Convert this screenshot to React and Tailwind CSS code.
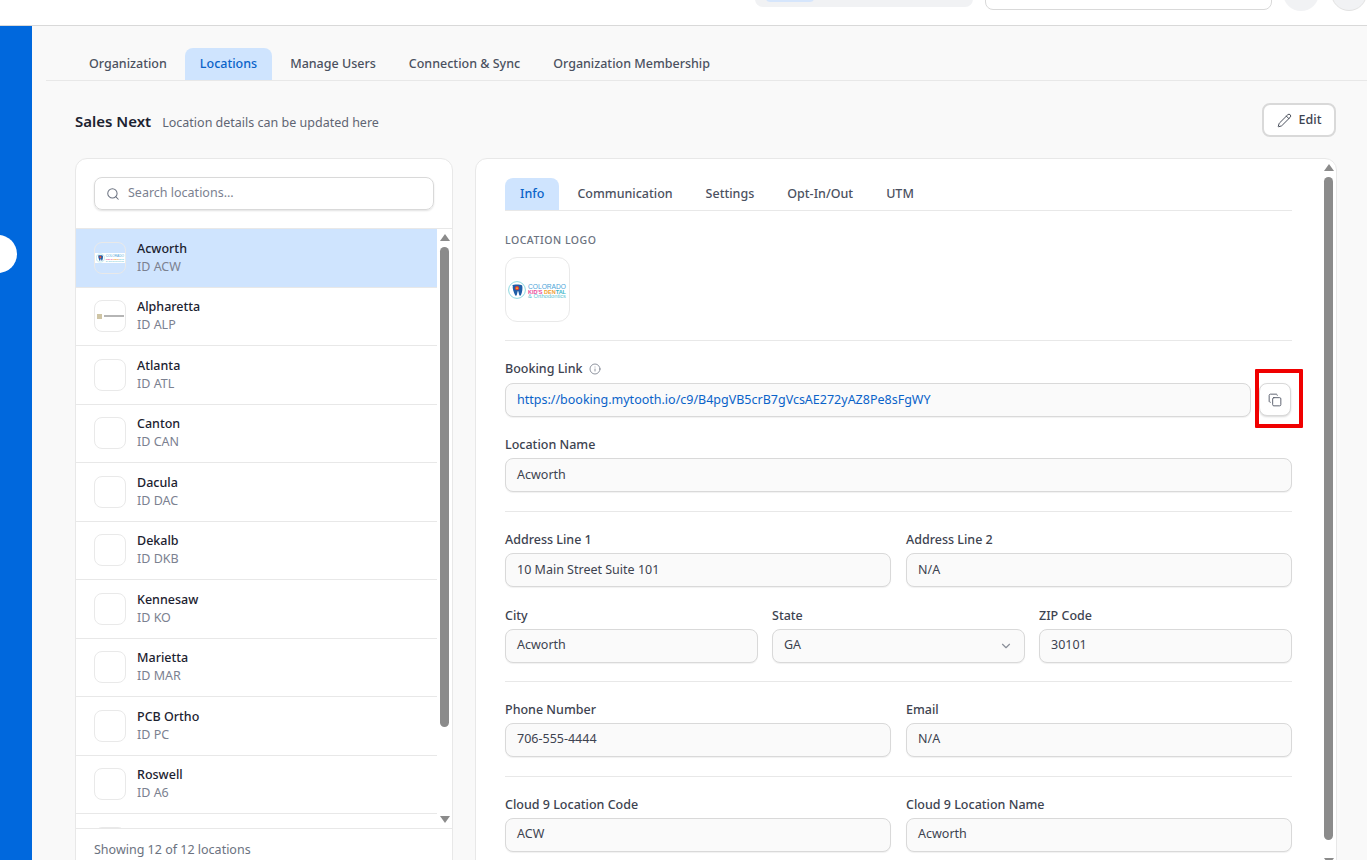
import { Search, Pencil, Info, Copy, ChevronDown } from 'lucide-react'

const locations = [
  { name: 'Acworth', id: 'ACW', logo: 'colorado' },
  { name: 'Alpharetta', id: 'ALP', logo: 'small' },
  { name: 'Atlanta', id: 'ATL' },
  { name: 'Canton', id: 'CAN' },
  { name: 'Dacula', id: 'DAC' },
  { name: 'Dekalb', id: 'DKB' },
  { name: 'Kennesaw', id: 'KO' },
  { name: 'Marietta', id: 'MAR' },
  { name: 'PCB Ortho', id: 'PC' },
  { name: 'Roswell', id: 'A6' },
  { name: '', id: '' },
]

function ColoradoLogo({ className }) {
  return (
    <svg viewBox="0 0 60 20" className={className}>
      <circle cx="9" cy="10" r="8.400" fill="none" stroke="#7fd4dc" strokeWidth="0.9" />
      <path d="M3.800 5.500c2-1.300 8.400-1.300 10.400 0 .6 3 0 6.500-1 9-.6 1.800-1.700 1.800-2.100 0l-.7-3c-.2-.7-.6-.7-.8 0l-.7 3c-.4 1.800-1.500 1.800-2.100 0-1-2.500-2.600-6-2-9z" fill="#1f5fa8" />
      <circle cx="9" cy="8.200" r="2.100" fill="#e23b3b" />
      <circle cx="9" cy="8.200" r="0.900" fill="#f5c518" />
      <text x="20" y="8.800" fontSize="6.600" textLength="38" lengthAdjust="spacingAndGlyphs" fill="#4aa3d8" fontFamily="Liberation Sans, sans-serif">COLORADO</text>
      <text x="20" y="14" fontSize="5.200" fontWeight="700" textLength="38" lengthAdjust="spacingAndGlyphs" fill="#e84c9a" fontFamily="Liberation Sans, sans-serif">KID'S <tspan fill="#f0a030">DEN</tspan><tspan fill="#3bb5c9">TAL</tspan></text>
      <text x="20" y="18.300" fontSize="4.600" textLength="38" lengthAdjust="spacingAndGlyphs" fill="#5fc4d4" fontFamily="Liberation Sans, sans-serif">&amp; Orthodontics</text>
    </svg>
  )
}

function Scrollbar({ thumbClass, className }) {
  return (
    <div className={`flex flex-col items-center shrink-0 ${className}`}>
      <div className="w-0 h-0 mt-[5px] border-x-[5px] border-x-transparent border-b-[7px] border-b-[#8b8b8b]" />
      <div className={`w-[9px] rounded-full bg-[#8b8b8b] ${thumbClass}`} />
      <div className="flex-1" />
      <div className="w-0 h-0 mb-[5px] border-x-[5px] border-x-transparent border-t-[7px] border-t-[#8b8b8b]" />
    </div>
  )
}

function LocationRow({ loc, active }) {
  return (
    <div className={`h-[58.5px] shrink-0 flex items-center gap-[11px] pl-[18px] border-b border-[#e8e8e8] ${active ? 'bg-[#cfe4fe]' : 'bg-white'}`}>
      <div className="w-8 h-8 shrink-0 rounded-lg border border-[#e9e9e9] flex items-center justify-center overflow-hidden">
        {loc.logo === 'colorado' && (
          <div className="w-full bg-white h-[10px] flex items-center justify-center">
            <ColoradoLogo className="w-[29px] h-[10px]" />
          </div>
        )}
        {loc.logo === 'small' && (
          <div className="flex items-center gap-[2px]">
            <div className="w-[5px] h-[5px] bg-[#cfc5a5]" />
            <div className="w-[20px] h-[2px] bg-[#b5b5b5]" />
          </div>
        )}
      </div>
      {loc.name && (
        <div className="min-w-0">
          <div className="text-[12.5px] leading-[18px] font-medium text-[#1c2230]">{loc.name}</div>
          <div className="text-[12.5px] leading-[18px] text-[#7b8190]">ID {loc.id}</div>
        </div>
      )}
    </div>
  )
}

function Label({ children }) {
  return <div className="text-[12.5px] leading-[16px] font-medium text-[#3d4350] mb-[5px]">{children}</div>
}

function Field({ label, value, select }) {
  return (
    <div className="min-w-0">
      <Label>{label}</Label>
      <div className="h-[34px] rounded-lg border border-[#d9d9d9] bg-[#fafafa] shadow-[0_1px_1px_rgba(0,0,0,0.06)] flex items-center justify-between px-[11px] text-[12.5px] text-[#3d4350]">
        <span>{value}</span>
        {select && <ChevronDown className="w-[14px] h-[14px] text-[#8a8f99]" />}
      </div>
    </div>
  )
}

function Divider({ className }) {
  return <div className={`h-px bg-[#e8e8e8] ${className}`} />
}

export default function App() {
  const orgTabs = ['Organization', 'Locations', 'Manage Users', 'Connection & Sync', 'Organization Membership']
  const infoTabs = ['Info', 'Communication', 'Settings', 'Opt-In/Out', 'UTM']

  return (
    <div className="h-[860px] overflow-hidden flex flex-col bg-[#f9f9f9] font-['Noto_Sans',sans-serif] relative">
      {/* Top bar, mostly cut off by the capture */}
      <header className="h-[26px] shrink-0 bg-white border-b border-[#d9d9d9] flex justify-end items-end pb-[14px] overflow-hidden">
        <div className="w-[218px] h-[30px] mb-[4px] rounded-lg bg-[#f1f2f4] shrink-0 flex items-end pl-[11px] pb-[5px]">
          <div className="w-[48px] h-[10px] rounded bg-[#d6e6fc]" />
        </div>
        <div className="w-[287px] h-[30px] ml-[12px] mb-[1px] rounded-lg bg-white border border-[#d9d9d9] shrink-0" />
        <div className="w-[36px] h-[36px] ml-[11px] rounded-full bg-[#f1f2f4] shrink-0" />
        <div className="w-[36px] h-[36px] ml-[12px] rounded-full bg-[#f1f2f4] border border-[#e2e2e2] shrink-0" />
      </header>

      <div className="flex-1 flex min-h-0">
        <aside className="w-8 shrink-0 bg-[#0068dd]" />

        <main className="flex-1 min-w-0 pl-[14px]">
          <nav className="h-[55px] flex items-end gap-[3px] pl-[28px] border-b border-[#e8e8e8]">
            {orgTabs.map(t => (
              <div
                key={t}
                className={`h-[32px] px-[15px] flex items-center rounded-t-lg text-[12.5px] font-medium ${t === 'Locations' ? 'bg-[#cfe4fe] text-[#0a63c9]' : 'text-[#4b5160]'}`}
              >
                {t}
              </div>
            ))}
          </nav>

          <div className="pl-[29px] pr-[30px]">
            <div className="h-[77px] flex items-center justify-between">
              <div className="flex items-baseline gap-[11px] pt-[3px]">
                <h1 className="text-[15px] font-semibold text-[#1c2230]">Sales Next</h1>
                <p className="text-[12.5px] text-[#5f6573]">Location details can be updated here</p>
              </div>
              <button className="w-[74px] h-[34px] mt-px mr-px rounded-lg bg-white border-2 border-[#d9d9d9] flex items-center justify-center gap-[7px] text-[12.5px] font-medium text-[#3d4350]">
                <Pencil className="w-[15px] h-[15px]" strokeWidth={1.5} />
                Edit
              </button>
            </div>

            <div className="flex gap-[22px] items-start">
              {/* Location list */}
              <section className="w-[378px] h-[720px] shrink-0 bg-white border border-[#e8e8e8] rounded-xl overflow-hidden flex flex-col">
                <div className="h-[70px] shrink-0 pt-[18px] px-[18px] border-b border-[#e8e8e8]">
                  <div className="h-[33px] rounded-lg border border-[#d9d9d9] shadow-[0_1px_2px_rgba(0,0,0,0.12)] flex items-center gap-[8px] px-[11px] text-[12.5px] text-[#7b8190]">
                    <Search className="w-[14px] h-[14px] text-[#6b7280]" strokeWidth={1.75} />
                    Search locations...
                  </div>
                </div>
                <div className="h-[600px] shrink-0 flex border-b border-[#e8e8e8]">
                  <div className="flex-1 min-w-0 flex flex-col overflow-hidden">
                    {locations.map((loc, i) => <LocationRow key={i} loc={loc} active={i === 0} />)}
                  </div>
                  <Scrollbar className="w-[15px]" thumbClass="h-[480px] mt-[6px]" />
                </div>
                <div className="pt-[12px] pl-[18px] text-[12.5px] leading-[18px] text-[#6b7280]">Showing 12 of 12 locations</div>
              </section>

              {/* Details */}
              <section className="w-[862px] h-[720px] shrink-0 bg-white border border-[#e8e8e8] rounded-xl overflow-hidden flex">
                <div className="flex-1 min-w-0 pl-[29px] pr-[29px] pt-[19px]">
                  <div className="h-[33px] flex gap-[3px] border-b border-[#e8e8e8]">
                    {infoTabs.map(t => (
                      <div
                        key={t}
                        className={`h-[32px] flex items-center px-[15px] rounded-t-lg text-[12.5px] font-medium ${t === 'Info' ? 'bg-[#cfe4fe] text-[#0a63c9]' : 'text-[#4b5160]'}`}
                      >
                        {t}
                      </div>
                    ))}
                  </div>

                  <div className="mt-[22px] text-[10.500px] leading-[14px] font-medium tracking-[0.05em] uppercase text-[#6b7280]">Location logo</div>
                  <div className="mt-[10px] w-[65px] h-[65px] rounded-xl border border-[#e9e9e9] flex items-center justify-center">
                    <ColoradoLogo className="w-[60px] h-[20px]" />
                  </div>
                  <Divider className="mt-[18px]" />

                  <div className="mt-[20px] flex items-center gap-[6px]">
                    <span className="text-[12.5px] leading-[16px] font-medium text-[#3d4350]">Booking Link</span>
                    <Info className="w-3 h-3 text-[#6b7280]" strokeWidth={1.5} />
                  </div>
                  <div className="mt-[6px] w-[786px] flex gap-[8px] relative">
                    <div className="flex-1 h-[34px] rounded-lg border border-[#d9d9d9] bg-[#fafafa] shadow-[0_1px_1px_rgba(0,0,0,0.06)] flex items-center px-[11px] text-[12.5px] text-[#0a63c9]">
                      https://booking.mytooth.io/c9/B4pgVB5crB7gVcsAE272yAZ8Pe8sFgWY
                    </div>
                    <button className="w-[32px] h-[33px] rounded-lg bg-white border border-[#d9d9d9] shadow-[0_1px_2px_rgba(0,0,0,0.15)] flex items-center justify-center text-[#4b5160]">
                      <Copy className="w-[14px] h-[14px]" strokeWidth={1.5} />
                    </button>
                    {/* annotation box from the screenshot */}
                    <div className="absolute left-[750px] top-[-14px] w-[48px] h-[59px] border-4 rounded-[1px] border-[#f00000] pointer-events-none" />
                  </div>

                  <div className="mt-[20px]">
                    <Field label="Location Name" value="Acworth" />
                  </div>
                  <Divider className="mt-[19px]" />

                  <div className="mt-[20px] grid grid-cols-2 gap-x-[15px]">
                    <Field label="Address Line 1" value="10 Main Street Suite 101" />
                    <Field label="Address Line 2" value="N/A" />
                  </div>
                  <div className="mt-[20.5px] grid grid-cols-3 gap-x-[14px]">
                    <Field label="City" value="Acworth" />
                    <Field label="State" value="GA" select />
                    <Field label="ZIP Code" value="30101" />
                  </div>
                  <Divider className="mt-[18px]" />

                  <div className="mt-[20px] grid grid-cols-2 gap-x-[15px]">
                    <Field label="Phone Number" value="706-555-4444" />
                    <Field label="Email" value="N/A" />
                  </div>
                  <Divider className="mt-[19px]" />

                  <div className="mt-[20px] grid grid-cols-2 gap-x-[15px]">
                    <Field label="Cloud 9 Location Code" value="ACW" />
                    <Field label="Cloud 9 Location Name" value="Acworth" />
                  </div>
                </div>
                <Scrollbar className="w-[15px] h-[711px]" thumbClass="h-[663px] mt-[6px]" />
              </section>
            </div>
          </div>
        </main>
      </div>

      {/* sidebar collapse handle */}
      <div className="absolute left-[-21px] top-[235px] w-[38px] h-[38px] rounded-full bg-white" />
    </div>
  )
}
